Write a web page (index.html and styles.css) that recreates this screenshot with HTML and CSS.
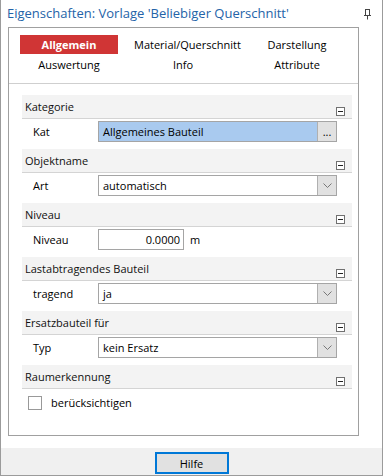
FILE: index.html
```html
<!DOCTYPE html>
<html lang="de">
<head>
    <meta charset="UTF-8">
    <title>Eigenschaften</title>
    <link rel="stylesheet" href="styles.css">
</head>
<body>
    <div class="window">
        <div class="titlebar">
            <span class="title">Eigenschaften: Vorlage 'Beliebiger Querschnitt'</span>
            <svg class="pin" width="9" height="11" viewBox="0 0 9 11">
                <path d="M2 0.5h5M2.5 0.5v6M6.5 0.5v6M1 6.5h7M4.5 6.5v4" stroke="#444" stroke-width="1" fill="none"/>
            </svg>
        </div>

        <div class="panel">
            <div class="tabs">
                <div class="tab active">Allgemein</div>
                <div class="tab">Material/Querschnitt</div>
                <div class="tab">Darstellung</div>
                <div class="tab">Auswertung</div>
                <div class="tab">Info</div>
                <div class="tab">Attribute</div>
            </div>

            <div class="groups">
                <div class="group">
                    <div class="group-head"><span>Kategorie</span><span class="collapse"></span></div>
                    <div class="row">
                        <label>Kat</label>
                        <div class="field selected">
                            <span class="value">Allgemeines Bauteil</span>
                            <span class="btn">...</span>
                        </div>
                    </div>
                </div>

                <div class="group">
                    <div class="group-head"><span>Objektname</span><span class="collapse"></span></div>
                    <div class="row">
                        <label>Art</label>
                        <div class="field">
                            <span class="value">automatisch</span>
                            <span class="btn"><svg width="9" height="5" viewBox="0 0 9 5"><path d="M0.5 0.5l4 4 4-4" stroke="#777" fill="none"/></svg></span>
                        </div>
                    </div>
                </div>

                <div class="group">
                    <div class="group-head"><span>Niveau</span><span class="collapse"></span></div>
                    <div class="row">
                        <label>Niveau</label>
                        <div class="field short"><span class="value num">0.0000</span></div>
                        <span class="unit">m</span>
                    </div>
                </div>

                <div class="group">
                    <div class="group-head"><span>Lastabtragendes Bauteil</span><span class="collapse"></span></div>
                    <div class="row">
                        <label>tragend</label>
                        <div class="field">
                            <span class="value">ja</span>
                            <span class="btn"><svg width="9" height="5" viewBox="0 0 9 5"><path d="M0.5 0.5l4 4 4-4" stroke="#777" fill="none"/></svg></span>
                        </div>
                    </div>
                </div>

                <div class="group">
                    <div class="group-head"><span>Ersatzbauteil für</span><span class="collapse"></span></div>
                    <div class="row">
                        <label>Typ</label>
                        <div class="field">
                            <span class="value">kein Ersatz</span>
                            <span class="btn"><svg width="9" height="5" viewBox="0 0 9 5"><path d="M0.5 0.5l4 4 4-4" stroke="#777" fill="none"/></svg></span>
                        </div>
                    </div>
                </div>

                <div class="group">
                    <div class="group-head"><span>Raumerkennung</span><span class="collapse"></span></div>
                    <div class="check-row">
                        <span class="checkbox"></span>
                        <span>berücksichtigen</span>
                    </div>
                </div>
            </div>
        </div>

        <div class="footer">
            <button class="help">Hilfe</button>
        </div>
    </div>
</body>
</html>
```

FILE: styles.css
```css
body {
    margin: 0;
    font-family: "Open Sans", "Noto Sans", sans-serif;
    font-size: 11px;
    color: #000;
    background: #fff;
}
.window {
    width: 383px;
    height: 476px;
    box-sizing: border-box;
    border: 1px solid #9b9b9b;
    border-top: none;
    display: flex;
    flex-direction: column;
    background: #fff;
}
.titlebar {
    height: 27px;
    display: flex;
    align-items: flex-start;
    justify-content: space-between;
    padding: 0 10px 0 6px;
}
.title {
    color: #2463a8;
    font-size: 13px;
    line-height: 16px;
    margin-top: 5px;
}
.pin {
    margin-top: 9px;
}
.panel {
    margin: 0 23px 0 7px;
    height: 409px;
    box-sizing: border-box;
    border: 1px solid #a0a0a0;
}
.tabs {
    display: grid;
    grid-template-columns: 114px 114px 114px;
    grid-auto-rows: 19px;
    row-gap: 1px;
    padding: 7px 3px 9px;
    border-bottom: 1px solid #cfcfcf;
}
.tab {
    text-align: center;
    line-height: 19px;
    margin: 0 8px;
}
.tab.active {
    background: #d03535;
    color: #fff;
    font-weight: bold;
}
.groups {
    padding: 11px 6px 0 13px;
}
.group-head {
    height: 23px;
    background: #f3f3f3;
    border-bottom: 1px solid #d4d4d4;
    display: flex;
    justify-content: space-between;
    padding: 0 7px 0 3px;
    line-height: 23px;
    color: #111;
}
.collapse {
    width: 7px;
    height: 7px;
    border: 1px solid #707070;
    margin-top: 12px;
    background: linear-gradient(#222, #222) center / 5px 1px no-repeat #fff;
}
.row {
    height: 30px;
    display: flex;
    align-items: flex-start;
    padding-top: 2px;
    box-sizing: border-box;
}
.row label {
    width: 65px;
    padding-left: 11px;
    line-height: 21px;
}
.field {
    width: 239px;
    height: 21px;
    box-sizing: border-box;
    border: 1px solid #a5a5a5;
    display: flex;
    background: #fff;
}
.field.selected {
    background: #a9caef;
}
.field.short {
    width: 86px;
}
.value {
    flex: 1;
    padding-left: 4px;
    line-height: 19px;
}
.value.num {
    text-align: right;
    padding-right: 3px;
}
.unit {
    margin-left: 6px;
    line-height: 21px;
}
.btn {
    width: 18px;
    border-left: 1px solid #b0b0b0;
    background: #e1e1e1;
    display: flex;
    align-items: center;
    justify-content: center;
    line-height: 16px;
}
.check-row {
    display: flex;
    align-items: center;
    padding: 6px 0 0 6px;
}
.checkbox {
    width: 14px;
    height: 14px;
    box-sizing: border-box;
    border: 1px solid #999;
    margin-right: 9px;
}
.footer {
    margin-top: 12px;
    flex: 1;
    background: #f0f0f0;
    display: flex;
    justify-content: center;
    padding-top: 4px;
}
.help {
    width: 74px;
    height: 22px;
    border: 2px solid #0078d7;
    background: #e1e1e1;
    font-family: inherit;
    font-size: 11px;
    color: #000;
    padding: 0;
}
```
